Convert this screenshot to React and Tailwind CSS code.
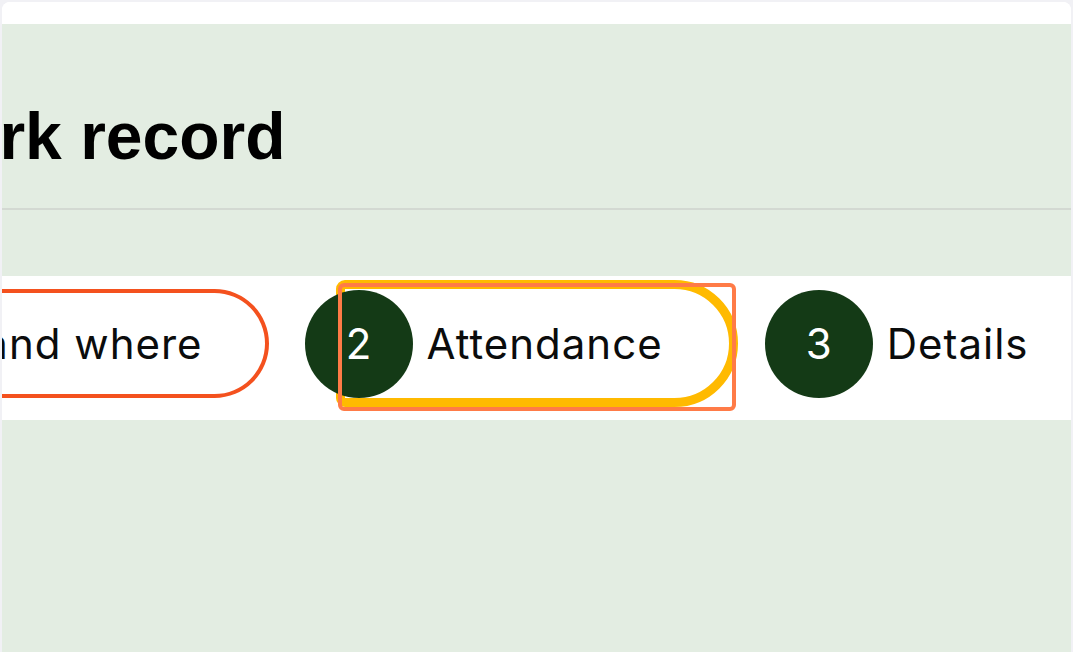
import React from 'react';

const steps = [
  { n: 1, label: 'When and where', state: 'error' },
  { n: 2, label: 'Attendance', state: 'focus' },
  { n: 3, label: 'Details', state: 'plain' },
];

// Pill styling per step state
const PILL = {
  error: 'border-[#f4511e]',
  focus: 'border-white outline-[9px] outline-solid outline-[#ffba00]',
  plain: 'border-transparent',
};

function Step({ n, label, state }) {
  return (
    <div className="flex items-center">
      <div className="relative z-10 flex h-[108px] w-[108px] shrink-0 items-center justify-center rounded-full bg-[#143a16] text-[42px] text-white">
        {n}
      </div>
      <div
        className={`relative -ml-[68px] flex h-[109px] items-center whitespace-nowrap rounded-l-[14px] rounded-r-full border-4 pl-[78px] pr-[62px] text-[42px] tracking-[1px] text-[#0b0c0c] ${PILL[state]}`}
      >
        {label}
        {state === 'focus' && (
          // screenshot annotation box
          <div className="pointer-events-none absolute -top-[10px] -bottom-[17px] -left-[11px] -right-[11px] z-20 rounded-[6px] border-4 border-[#ff7b47]" />
        )}
      </div>
    </div>
  );
}

export default function App() {
  return (
    <div className="h-[652px] w-[1073px] overflow-hidden bg-[#f1f1f5] px-[2px] pt-[2px]" style={{ fontFamily: 'Inter, "Noto Sans", sans-serif' }}>
      <div className="flex h-full flex-col overflow-hidden rounded-t-[8px] bg-white">
        <div className="h-[22px] shrink-0 bg-white" />
        <div className="flex-1 bg-[#e3ede2]">
          <h1
            className="-ml-[104px] pt-[77px] text-[66px] font-bold leading-[70px] text-black whitespace-nowrap"
            style={{ fontFamily: '"Liberation Sans", Arial, sans-serif' }}
          >
            Work record
          </h1>
          <div className="mt-[37px] h-[2px] bg-[#d3d9d2]" />
          <div className="mt-[66px] -ml-[272px] flex items-center gap-[36px] bg-white pb-[22px] pt-[13px]">
            {steps.map((s) => (
              <Step key={s.n} {...s} />
            ))}
          </div>
        </div>
      </div>
    </div>
  );
}
